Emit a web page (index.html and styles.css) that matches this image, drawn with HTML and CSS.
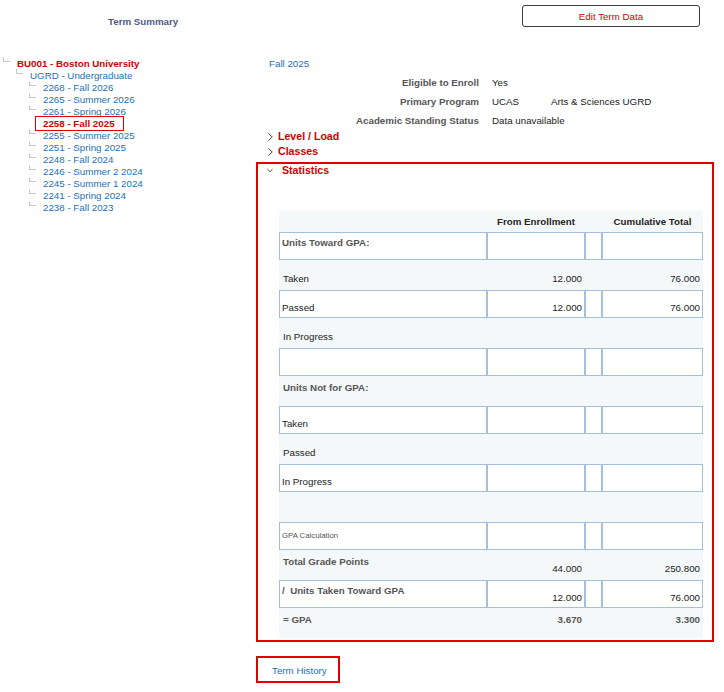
FILE: index.html
```html
<!DOCTYPE html>
<html lang="en">
<head>
<meta charset="utf-8">
<title>Term Summary</title>
<link rel="stylesheet" href="styles.css">
</head>
<body>
<div class="page">
  <aside class="left">
    <div class="title">Term Summary</div>
    <ul class="tree">
      <li class="node l0 root"><span class="conn"></span><span class="txt">BU001 - Boston University</span></li>
      <li class="node l1"><span class="conn"></span><span class="txt">UGRD - Undergraduate</span></li>
      <li class="node l2"><span class="conn"></span><span class="txt">2268 - Fall 2026</span></li>
      <li class="node l2"><span class="conn"></span><span class="txt">2265 - Summer 2026</span></li>
      <li class="node l2"><span class="conn"></span><span class="txt">2261 - Spring 2026</span></li>
      <li class="node l2 selected"><span class="conn"></span><span class="txt">2258 - Fall 2025</span></li>
      <li class="node l2"><span class="conn"></span><span class="txt">2255 - Summer 2025</span></li>
      <li class="node l2"><span class="conn"></span><span class="txt">2251 - Spring 2025</span></li>
      <li class="node l2"><span class="conn"></span><span class="txt">2248 - Fall 2024</span></li>
      <li class="node l2"><span class="conn"></span><span class="txt">2246 - Summer 2 2024</span></li>
      <li class="node l2"><span class="conn"></span><span class="txt">2245 - Summer 1 2024</span></li>
      <li class="node l2"><span class="conn"></span><span class="txt">2241 - Spring 2024</span></li>
      <li class="node l2"><span class="conn"></span><span class="txt">2238 - Fall 2023</span></li>
    </ul>
  </aside>
  <main class="right">
    <div class="toolbar"><button class="edit-btn" type="button">Edit Term Data</button></div>
    <div class="term-name">Fall 2025</div>
    <div class="info">
      <div class="k">Eligible to Enroll</div><div class="v span">Yes</div>
      <div class="k">Primary Program</div><div class="v">UCAS</div><div class="v">Arts &amp; Sciences UGRD</div>
      <div class="k">Academic Standing Status</div><div class="v span">Data unavailable</div>
    </div>
    <div class="toggle"><svg class="chev-r" width="5" height="8" viewBox="0 0 5 8"><polyline points="0.5,0.5 4.3,4 0.5,7.5" fill="none" stroke="#444" stroke-width="1"/></svg><span>Level / Load</span></div>
    <div class="toggle"><svg class="chev-r" width="5" height="8" viewBox="0 0 5 8"><polyline points="0.5,0.5 4.3,4 0.5,7.5" fill="none" stroke="#444" stroke-width="1"/></svg><span>Classes</span></div>
    <section class="stats">
      <div class="stats-head"><svg class="chev-d" width="6" height="5" viewBox="0 0 6 5"><polyline points="0.5,0.8 3,4 5.5,0.8" fill="none" stroke="#666" stroke-width="1"/></svg><span>Statistics</span></div>
      <div class="stat-grid">
        <div class="sr head"><div></div><div class="c">From Enrollment</div><div></div><div class="c">Cumulative Total</div></div>
        <div class="sr box"><div class="lbl hd">Units Toward GPA:</div><div></div><div></div><div></div></div>
        <div class="sr open"><div class="lbl">Taken</div><div class="num">12.000</div><div></div><div class="num">76.000</div></div>
        <div class="sr box"><div class="lbl">Passed</div><div class="num">12.000</div><div></div><div class="num">76.000</div></div>
        <div class="sr open"><div class="lbl">In Progress</div><div></div><div></div><div></div></div>
        <div class="sr box"><div></div><div></div><div></div><div></div></div>
        <div class="sr open"><div class="lbl hd">Units Not for GPA:</div><div></div><div></div><div></div></div>
        <div class="sr box"><div class="lbl">Taken</div><div></div><div></div><div></div></div>
        <div class="sr open"><div class="lbl">Passed</div><div></div><div></div><div></div></div>
        <div class="sr box"><div class="lbl">In Progress</div><div></div><div></div><div></div></div>
        <div class="sr open"><div></div><div></div><div></div><div></div></div>
        <div class="sr box"><div class="lbl small">GPA Calculation</div><div></div><div></div><div></div></div>
        <div class="sr open"><div class="lbl hd">Total Grade Points</div><div class="num">44.000</div><div></div><div class="num">250.800</div></div>
        <div class="sr box"><div class="lbl hd">/&nbsp; Units Taken Toward GPA</div><div class="num">12.000</div><div></div><div class="num">76.000</div></div>
        <div class="sr open gpa"><div class="lbl hd">= GPA</div><div class="num">3.670</div><div></div><div class="num">3.300</div></div>
      </div>
    </section>
    <a class="history" href="#">Term History</a>
  </main>
</div>
</body>
</html>
```
FILE: styles.css
```css
* { box-sizing: border-box; }
html, body { margin: 0; padding: 0; background: #fff; }
body {
  font-family: "Liberation Sans", Arial, sans-serif;
  font-size: 9.75px;
  color: #222;
}
.page { display: flex; align-items: flex-start; }

/* left tree */
.left { width: 256px; flex: none; }
.title {
  padding: 15px 0 0 108px;
  line-height: 13px;
  font-weight: bold;
  color: #4d5a88;
}
.tree { list-style: none; margin: 30px 0 0; padding: 0; }
.node { display: flex; height: 12px; line-height: 12px; white-space: nowrap; color: #2270bb; }
.node.l1 { padding-left: 13px; }
.node.l2 { padding-left: 26px; }
.conn {
  flex: none;
  width: 7px; height: 5px;
  margin: -1px 7px 0 3px;
  border-left: 1px solid #c3c8cd;
  border-bottom: 1px solid #c3c8cd;
}
.root { color: #d00000; font-weight: bold; }
.selected .conn { visibility: hidden; }
.selected .txt { position: relative; color: #d00000; font-weight: bold; }
.selected .txt::after {
  content: "";
  position: absolute;
  left: -8px; right: -9px; top: -2px; bottom: -1px;
  border: 1px solid #e00000;
}

/* right column */
.right { flex: 1; padding-right: 10px; }
.toolbar { display: flex; justify-content: flex-end; padding: 5px 14px 0 0; }
.edit-btn {
  width: 178px; height: 22px;
  border: 1px solid #3c3c3c;
  border-radius: 3px;
  background: #fff;
  color: #d00000;
  font-family: inherit;
  font-size: 9.75px;
  padding: 0;
}
.term-name { margin: 31px 0 0 13px; line-height: 12px; color: #2270bb; }
.info {
  display: grid;
  grid-template-columns: 223px 46px auto;
  column-gap: 13px;
  row-gap: 7px;
  margin-top: 7px;
  line-height: 12px;
}
.info .k { text-align: right; font-weight: bold; color: #555; grid-column: 1; }
.info .v { white-space: nowrap; }
.info .v.span { grid-column: 2 / 4; }
.toggle {
  display: flex; align-items: center;
  padding-left: 12px;
  line-height: 15px;
  font-size: 10.6px; font-weight: bold; color: #d00000;
}
.info + .toggle { margin-top: 2px; }
.chev-r { margin-right: 5px; flex: none; }

.stats {
  margin-top: 3px;
  border: 2px solid #e00000;
  padding-bottom: 2px;
}
.stats-head {
  display: flex; align-items: center;
  padding-left: 9px;
  line-height: 12px;
  font-size: 10.6px; font-weight: bold; color: #d00000;
}
.chev-d { margin-right: 9px; flex: none; }
.stat-grid {
  width: 424px;
  margin: 35px 0 0 21px;
  background: #f5f8f9;
}
.sr { display: grid; grid-template-columns: 208px 98px 17px 101px; }
.sr > div { border: 1px solid transparent; line-height: 12px; white-space: nowrap; }
.sr.head { height: 21px; }
.sr.head > div { line-height: 19px; font-weight: bold; color: #222; }
.sr .c { text-align: center; }
.sr.box { height: 28px; }
.sr.box > div { background: #fff; border-color: #a6bfda; padding-top: 10.5px; }
.sr.box > .hd { padding-top: 3.5px; }
.sr.box > .lbl { padding-left: 2px; }
.sr.box > .small { padding-top: 7px; font-size: 7.8px; color: #555; }
.sr.open { height: 30px; }
.sr.open > div { padding-top: 11.5px; }
.sr.open > .hd { padding-top: 4.5px; }
.sr.open > .lbl { padding-left: 3px; }
.sr.gpa > div { padding-top: 4.5px; }
.hd { font-weight: bold; color: #555; }
.num { text-align: right; padding-right: 2px; }
.gpa .num { font-weight: bold; color: #555; }

.history {
  display: inline-block;
  margin-top: 14px;
  border: 2px solid #e00000;
  padding: 2px 11px 0 14px;
  line-height: 21px;
  color: #2270bb;
  text-decoration: none;
}
```
